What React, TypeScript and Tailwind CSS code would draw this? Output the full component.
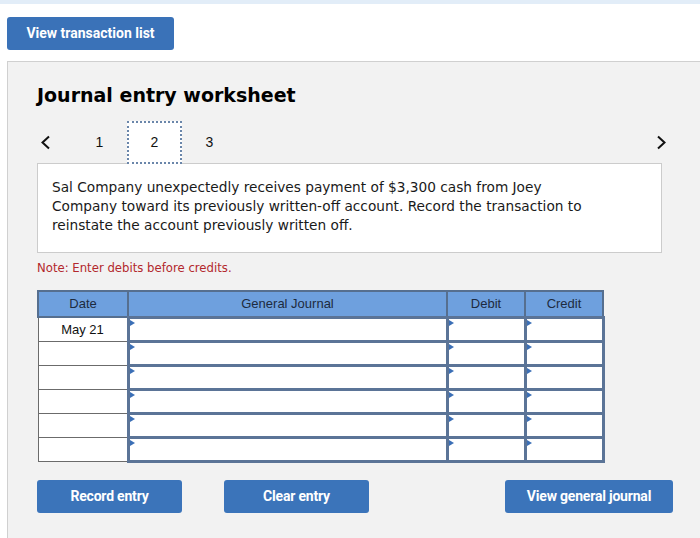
import React from "react";

const rows = ["May 21", "", "", "", "", ""];

function Marker() {
  return (
    <span className="absolute left-0 top-[1px] h-0 w-0 border-y-[3px] border-l-[5px] border-y-transparent border-l-[#3b6fb6]" />
  );
}

function ChevronLeft() {
  return (
    <svg width="11" height="15" viewBox="0 0 11 15" fill="none" stroke="#111" strokeWidth="2">
      <polyline points="9,1.5 2.5,7.5 9,13.5" />
    </svg>
  );
}

function ChevronRight() {
  return (
    <svg width="11" height="15" viewBox="0 0 11 15" fill="none" stroke="#111" strokeWidth="2">
      <polyline points="2,1.5 8.5,7.5 2,13.5" />
    </svg>
  );
}

export default function App() {
  const btn =
    "h-[33px] rounded-[3px] bg-[#3b74ba] text-[14px] font-bold tracking-[-0.2px] text-white font-['Roboto',sans-serif]";

  return (
    <div className="flex h-[538px] w-[700px] flex-col overflow-hidden bg-white font-['Liberation_Sans',Arial,sans-serif]">
      <div className="h-[4px] bg-[#e2edf8]" />

      <button className="ml-[7px] mt-[13px] h-[33px] w-[167px] rounded-[3px] bg-[#3a72b8] text-[14px] font-bold text-white font-['Roboto',sans-serif]">
        View transaction list
      </button>

      <div className="ml-[7px] mt-[11px] flex-1 border-l border-t border-[#d0d0d0] bg-[#f2f2f2] pl-[29px] pt-[21px]">
        <h1 className="text-[19px] font-bold leading-[24px] text-black font-['DejaVu_Sans',Verdana,sans-serif]">
          Journal entry worksheet
        </h1>

        <div className="mt-[14px] flex h-[42px] w-[630px] items-center">
          <div className="flex w-[35px] items-center pl-[3px]">
            <ChevronLeft />
          </div>
          <div className="flex w-[55px] items-center justify-center text-[14px] text-[#111]">1</div>
          <div className="relative z-10 flex h-[43px] w-[55px] items-center justify-center self-start border-2 border-dotted border-[#6a86aa] bg-white text-[14px] text-[#111]">
            2
          </div>
          <div className="flex w-[55px] items-center justify-center text-[14px] text-[#111]">3</div>
          <div className="ml-auto flex items-center">
            <ChevronRight />
          </div>
        </div>

        <div className="h-[90px] w-[625px] border border-[#cccccc] bg-white px-[14px] pt-[14px] font-['DejaVu_Sans',Verdana,sans-serif]">
          <p className="w-[548px] text-[13.7px] leading-[19px] text-[#1a1a1a]">
            Sal Company unexpectedly receives payment of $3,300 cash from Joey Company toward its previously written-off account. Record the transaction to reinstate the account previously written off.
          </p>
        </div>

        <p className="mt-[7px] text-[11.7px] leading-[16px] text-[#b3282d] font-['DejaVu_Sans',Verdana,sans-serif]">
          Note: Enter debits before credits.
        </p>

        <table className="mt-[14px] w-[565px] table-fixed border-collapse text-[13px]">
          <colgroup>
            <col className="w-[90px]" />
            <col className="w-[319px]" />
            <col className="w-[78px]" />
            <col className="w-[78px]" />
          </colgroup>
          <thead>
            <tr>
              {["Date", "General Journal", "Debit", "Credit"].map((h) => (
                <th
                  key={h}
                  className="h-[26px] border-2 border-[#566f8f] bg-[#6ea0de] p-0 text-center font-normal text-[#1d2b40]"
                >
                  {h}
                </th>
              ))}
            </tr>
          </thead>
          <tbody>
            {rows.map((d, i) => (
              <tr key={i}>
                <td className="h-[24px] border border-[#6b6b6b] bg-white p-0 text-center text-[#111]">{d}</td>
                <td className="relative border-[3px] border-[#5b7497] bg-white p-0">
                  <Marker />
                </td>
                <td className="relative border-[3px] border-[#5b7497] bg-white p-0">
                  <Marker />
                </td>
                <td className="relative border-[3px] border-[#5b7497] bg-white p-0">
                  <Marker />
                </td>
              </tr>
            ))}
          </tbody>
        </table>

        <div className="mt-[17px] flex">
          <button className={`${btn} w-[145px]`}>Record entry</button>
          <button className={`${btn} ml-[42px] w-[145px]`}>Clear entry</button>
          <button className={`${btn} ml-[136px] w-[168px]`}>View general journal</button>
        </div>
      </div>
    </div>
  );
}
